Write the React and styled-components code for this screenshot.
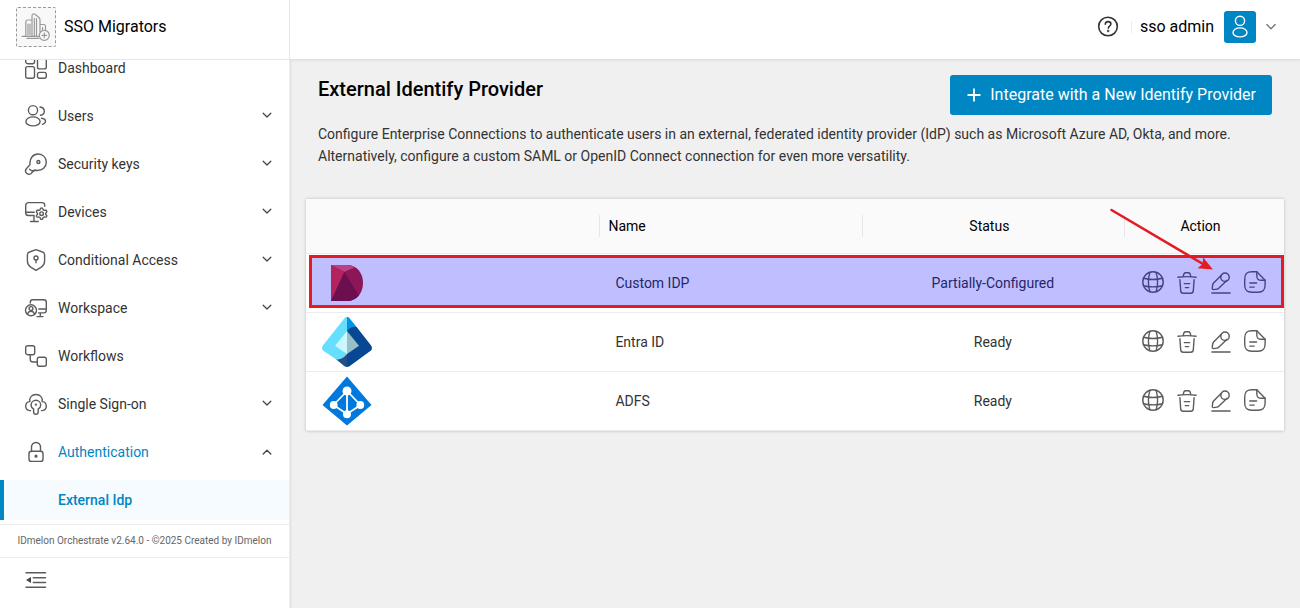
import React from "react";
import styled, { createGlobalStyle } from "styled-components";

const GlobalStyle = createGlobalStyle`
  *, *::before, *::after { box-sizing: border-box; }
  body {
    margin: 0;
    background: #f0f0f0;
    color: #333;
    font-family: Roboto, "Liberation Sans", sans-serif;
    font-size: 14px;
    line-height: 22px;
  }
  button { font: inherit; color: inherit; background: none; border: 0; padding: 0; cursor: pointer; }
  a { color: inherit; text-decoration: none; }
  h1, p { margin: 0; }
  svg { display: block; flex: none; }
`;

const Shell = styled.div`
  display: grid;
  grid-template-columns: 290px minmax(0, 1fr);
  grid-template-rows: 60px minmax(0, 1fr);
  height: 100vh;
`;

const Brand = styled.div`
  display: flex;
  align-items: center;
  gap: 8px;
  padding: 0 16px 6px;
  background: #fff;
  border-right: 1px solid #ececec;
  border-bottom: 1px solid #ececec;
  color: #000;
  font-size: 16px;
`;

const BrandLogo = styled.button`
  width: 40px;
  height: 40px;
  border: 1px dashed #999;
  border-radius: 2px;
  background: #f8f8f8;
`;

const TopBar = styled.header`
  display: flex;
  align-items: center;
  justify-content: flex-end;
  padding: 0 24px 6px 16px;
  background: #fff;
  border-bottom: 1px solid #e2e2e2;
  box-shadow: 0 1px 2px rgba(0, 0, 0, 0.06);
`;

const Divider = styled.span`
  width: 1px;
  height: 12px;
  margin: 0 8px 0 11px;
  background: #ececec;
`;

const UserMenu = styled.button`
  display: flex;
  align-items: center;
  gap: 10px;
  color: #000;
  font-size: 16px;
`;

const Avatar = styled.span`
  display: grid;
  place-items: center;
  width: 32px;
  height: 32px;
  border-radius: 3px;
  background: #0086c3;
`;

const Sidebar = styled.aside`
  display: flex;
  flex-direction: column;
  min-height: 0;
  background: #fff;
  border-right: 1px solid #ececec;
  box-shadow: 1px 0 2px rgba(0, 0, 0, 0.08);
`;

const Nav = styled.nav`
  display: flex;
  flex: 1;
  flex-direction: column;
  justify-content: flex-end;
  gap: 8px;
  min-height: 0;
  padding-bottom: 4px;
  overflow: hidden;
`;

const NavItem = styled.a`
  display: flex;
  flex: none;
  align-items: center;
  gap: 10px;
  height: 40px;
  padding: 0 15px 0 24px;
  color: ${(p) => (p.$open ? "#0086c3" : "#333")};
`;

const NavLabel = styled.span`
  flex: 1;
`;

const SubItem = styled.a`
  display: flex;
  flex: none;
  align-items: center;
  height: 40px;
  padding-left: 54px;
  border-left: 4px solid #0086c3;
  background: #f5fbff;
  color: #0086c3;
  font-weight: 500;
`;

const Version = styled.footer`
  padding: 5px 8px;
  border-top: 1px solid #ececec;
  color: #666;
  font-size: 10px;
  text-align: center;
  white-space: nowrap;
`;

const CollapseBar = styled.div`
  height: 51px;
  padding: 10px 24px;
  border-top: 1px solid #ececec;
`;

const Main = styled.main`
  min-width: 0;
  padding: 15px 16px 24px;
`;

const Intro = styled.section`
  padding: 0 12px;
`;

const TitleRow = styled.div`
  display: flex;
  align-items: flex-start;
  justify-content: space-between;
  margin-bottom: 8px;
`;

const Title = styled.h1`
  color: #000;
  font-size: 20px;
  font-weight: 500;
  line-height: 28px;
`;

const PrimaryButton = styled.button`
  display: flex;
  align-items: center;
  gap: 8px;
  height: 40px;
  padding: 0 16px;
  border-radius: 3px;
  background: #0086c3;
  color: #fff;
  font-size: 16px;
`;

const Card = styled.section`
  margin-top: 32px;
  background: #fff;
  box-shadow: 0 0 3px rgba(0, 0, 0, 0.22);
`;

const Table = styled.table`
  width: 100%;
  table-layout: fixed;
  border-collapse: separate;
  border-spacing: 0;
`;

const LogoCol = styled.col`
  width: 30%;
`;

const ActionCol = styled.col`
  width: 160px;
`;

const HeadCell = styled.th`
  height: 55px;
  padding: 0;
  border-bottom: 1px solid #ececec;
  background: #fafafa;
  color: #000;
  font-weight: 400;
`;

const HeadLabel = styled.div`
  padding: 0 16px 0 8px;
  border-left: 1px solid #e6e6e6;
  text-align: ${(p) => p.$align || "center"};
`;

const Row = styled.tr`
  position: relative;
`;

const Cell = styled.td`
  height: 59px;
  padding: 0 16px;
  border-bottom: 1px solid #ececec;
  text-align: ${(p) => p.$align || "left"};
`;

const Actions = styled.div`
  display: flex;
  justify-content: center;
  gap: 10px;
`;

const Highlight = styled.span`
  position: absolute;
  inset: 1px 0 5px 3px;
  border: 3px solid #e31b23;
  background: rgba(0, 0, 255, 0.25);
  pointer-events: none;
`;

const Pointer = styled.svg`
  position: absolute;
  top: -49px;
  right: 68px;
  pointer-events: none;
`;

function Icon({ children, size = 24, color = "#5c5c5c", width = 1.4 }) {
  return (
    <svg width={size} height={size} viewBox={`0 0 ${size} ${size}`} fill="none" stroke={color}
      strokeWidth={width} strokeLinecap="round" strokeLinejoin="round" aria-hidden="true">
      {children}
    </svg>
  );
}

const gear = Array.from({ length: 48 }, (_, i) => {
  const a = (i / 48) * Math.PI * 2;
  const r = 4.9 + 0.8 * Math.tanh(2.5 * Math.cos(6 * a));
  return `${(17.6 + r * Math.sin(a)).toFixed(2)},${(13.7 + r * Math.cos(a)).toFixed(2)}`;
}).join(" ");

const navIcons = {
  dashboard: (
    <>
      <rect x="1.7" y="1.7" width="8.8" height="6" rx="2" />
      <rect x="1.7" y="10.6" width="8.8" height="11.7" rx="2" />
      <rect x="13.5" y="1.7" width="8.8" height="11.2" rx="2" />
      <rect x="13.5" y="16.4" width="8.8" height="5.9" rx="2" />
    </>
  ),
  users: (
    <>
      <circle cx="9" cy="6.2" r="4.6" />
      <ellipse cx="9" cy="17.4" rx="7.1" ry="4.5" />
      <path d="M16 3c2.700.4 4.300 2 4.300 4.200s-1.600 3.700-3.800 4.100" />
      <path d="M17.500 14.300c2.500.4 4 1.500 4 3s-1.200 2.500-3 3" />
    </>
  ),
  key: (
    <>
      <path d="M6 12.600C5.300 6.500 9 2 14.200 2c4.600 0 8.100 3.600 8.100 8.200 0 5-4 8.400-9 8.300-1.100 0-2-.2-2.900-.5l-2.900 3.100c-1.200 1.400-3.300 1.600-4.700.3-1.500-1.300-1.500-3.300-.4-4.700z" />
      <path d="m5.600 17.200 2 1.600h2.800" />
      <circle cx="14.400" cy="10" r="1.500" />
    </>
  ),
  devices: (
    <>
      <path d="M10 15.500H4.500a2.800 2.800 0 0 1-2.800-2.800V5.300A2.700 2.700 0 0 1 4.400 2.600h13.800A2.500 2.500 0 0 1 20.700 5v1.300M1.700 12.200h8.500M10 15.500v5.700M6.500 21.500h7.800" />
      <polygon points={gear} />
      <circle cx="17.600" cy="13.700" r="1.800" />
    </>
  ),
  shield: (
    <>
      <path d="M12 1.700 18.500 4a3 3 0 0 1 2.100 2.800v6.500c0 2.500-1.100 4.300-3.300 5.800L12 22.300l-5.300-3.200c-2.200-1.500-3.300-3.300-3.300-5.800V6.800A3 3 0 0 1 5.500 4z" />
      <circle cx="12" cy="10" r="2" />
      <path d="M12 12v2.800" />
    </>
  ),
  workspace: (
    <>
      <path d="M6.300 7v-.7a2.600 2.600 0 0 1 2.600-2.600h10.800a2.600 2.600 0 0 1 2.600 2.600v8a2.600 2.600 0 0 1-2.600 2.600h-5.200M14.800 13h7.500M16.300 17v3.500M13 20.600h6" />
      <circle cx="7" cy="14.300" r="5.500" />
      <circle cx="7" cy="12.500" r="1.900" />
      <path d="M3.700 17.800c.5-1.700 1.700-2.600 3.300-2.600s2.800.9 3.300 2.600" />
    </>
  ),
  workflows: (
    <>
      <rect x="1.700" y="1.700" width="9" height="9" rx="2" />
      <rect x="13.300" y="13.300" width="9" height="9" rx="2" />
      <path d="M6.200 10.700v4.600A2.700 2.700 0 0 0 8.900 18h4.400" />
    </>
  ),
  cloud: (
    <>
      <path d="M6.600 18.600h-.8c-2.400-.3-4.100-2-4.100-4.400 0-2.500 1.700-4.400 4.200-4.600C5.100 5.200 8 2.500 12 2.500s6.900 2.700 6.100 7.100c2.500.2 4.200 2.100 4.200 4.600 0 2.400-1.700 4.100-4.100 4.400h-.8" />
      <path d="M9.600 17c-1.700-.8-2.500-2.200-2.500-3.900A4.800 4.800 0 0 1 11.900 8.300a4.800 4.800 0 0 1 4.800 4.800c0 1.700-.9 3.100-2.500 3.900v3a2.300 2.300 0 0 1-4.600 0z" />
      <circle cx="11.900" cy="12.600" r=".5" />
    </>
  ),
  lock: (
    <>
      <path d="M7.500 11V7.100A4.500 4.500 0 0 1 12 2.500a4.500 4.500 0 0 1 4.500 4.600V11" />
      <rect x="5" y="11.200" width="14" height="10.200" rx="2.500" />
      <circle cx="12" cy="16.200" r=".9" fill="#5c5c5c" />
    </>
  ),
};

function Chevron({ up, color = "#444" }) {
  return (
    <Icon size={14} color={color} width={1.3}>
      <path d={up ? "m3.200 9 3.800-3.700L10.800 9" : "M3.200 4.200 7 8l3.800-3.800"} />
    </Icon>
  );
}

const navItems = [
  { label: "Dashboard", icon: "dashboard" },
  { label: "Users", icon: "users", group: true },
  { label: "Security keys", icon: "key", group: true },
  { label: "Devices", icon: "devices", group: true },
  { label: "Conditional Access", icon: "shield", group: true },
  { label: "Workspace", icon: "workspace", group: true },
  { label: "Workflows", icon: "workflows" },
  { label: "Single Sign-on", icon: "cloud", group: true },
  { label: "Authentication", icon: "lock", group: true, open: true },
];

const actionIcons = [
  {
    label: "Open site",
    art: (
      <>
        <circle cx="12" cy="11" r="10.200" />
        <path d="M8.900 1.400C7 7.500 7 14.500 8.900 20.600M15.100 1.400c1.900 6.100 1.900 13.100 0 19.200M2.400 7.300c6.200 1.500 13 1.500 19.200 0M2.400 14.700c6.200 1.500 13 1.500 19.200 0" />
      </>
    ),
  },
  {
    label: "Delete",
    art: (
      <path d="M2.900 6.200c6-.8 12.200-.8 18.200 0M8.200 5.500c.4-2.500.9-3.700 2.300-3.700h3c1.400 0 1.900 1.200 2.300 3.700M4.900 8.800l.8 11.100a2.600 2.600 0 0 0 2.600 2.400h7.400a2.600 2.600 0 0 0 2.600-2.400l.8-11.100M9.300 12.600h5.400M10.300 16.600h3.400" />
    ),
  },
  {
    label: "Edit",
    art: (
      <>
        <path d="M12.300 4.300 4.600 12c-.5.500-.8 1.200-.9 1.900l-.4 3.400c-.1.900.5 1.400 1.400 1.300l3.300-.5c.7-.1 1.300-.4 1.700-.9l8.400-7.900" />
        <circle cx="16" cy="6.200" r="4.200" />
        <path d="M2.900 22h18.200" />
      </>
    ),
  },
  {
    label: "Details",
    art: (
      <>
        <path d="M13.800.8H8.900C3.600.8 1.700 2.900 1.700 8v6c0 5.300 1.900 7.200 7.200 7.200h6c5.300 0 7.200-1.900 7.200-7.200V9.200z" />
        <path d="M13.800.8v3.600c0 3.600 1.200 4.800 4.800 4.800h3.500M6.800 12h6.800M6.800 16.100h4.400" />
      </>
    ),
  },
];

function CustomLogo() {
  return (
    <svg width="50" height="50" viewBox="0 0 50 50" aria-hidden="true">
      <path d="M9 7h16c10 0 16 8 16 18s-6 18-16 18H9z" fill="#bb1f21" />
      <path d="M9 7h16c3 0 5 1 7.300 2.500L22.300 14z" fill="#f95858" />
      <path d="M9 7l13.300 7L9 43z" fill="#f12f29" />
      <path d="M22.300 14 36.800 37.500C34 41 30 43 25 43H9z" fill="#901415" />
    </svg>
  );
}

function EntraLogo() {
  return (
    <svg width="50" height="50" viewBox="0 0 50 50" aria-hidden="true">
      <path d="M25 0c-1.200 0-2 .5-2.700 1.400L.9 28.500c-1.400 1.900-1.100 4.100.8 5.500L14 42.300c4 .8 7.600-1.500 11-5.300z" fill="#66dfff" />
      <path d="M25 0c1.200 0 2 .5 2.700 1.400L35 10.500l-10 8z" fill="#0294e4" />
      <path d="M25 14c2.600-3.500 6-5.100 9.600-4L49.100 28.500c1.400 1.900 1.100 4.100-.8 5.500L27.500 49.200c-.8.600-1.600.8-2.500.8z" fill="#074793" />
      <path d="M14 42.300c4 .8 7.600-1.500 11-5.300v13c-.9 0-1.700-.2-2.500-.8z" fill="#225086" />
      <path d="M25 14 13 28.700 25 37z" fill="#cbf8ff" />
      <path d="M25 14 37 28.700 25 37z" fill="#98bec6" />
    </svg>
  );
}

function AdfsLogo() {
  return (
    <svg width="50" height="50" viewBox="0 0 50 50" aria-hidden="true">
      <path d="M25 .5 49.500 29 25 49.500.5 29z" fill="#0078dc" />
      <path d="M25 15 11.500 29 25 38l13.500-9zM25 15v23" fill="none" stroke="#fff" strokeWidth="1.800" />
      <g fill="#fff">
        <circle cx="25" cy="15" r="4.500" />
        <circle cx="11.700" cy="29" r="3.900" />
        <circle cx="38.300" cy="29" r="3.900" />
        <circle cx="25" cy="38.300" r="4" />
      </g>
    </svg>
  );
}

const providers = [
  { name: "Custom IDP", status: "Partially-Configured", logo: <CustomLogo />, marked: true },
  { name: "Entra ID", status: "Ready", logo: <EntraLogo /> },
  { name: "ADFS", status: "Ready", logo: <AdfsLogo /> },
];

function ProviderRow({ provider }) {
  return (
    <Row>
      <Cell>
        {provider.logo}
        {provider.marked && (
          <>
            <Highlight />
            <Pointer width="110" height="70" viewBox="0 0 110 70" aria-hidden="true">
              <path d="M5.500 5 97 59" stroke="#e31b23" strokeWidth="2.600" strokeLinecap="round" />
              <path d="m107 64.500-15.500-1.300 5-4 .7-6.700z" fill="#e31b23" />
            </Pointer>
          </>
        )}
      </Cell>
      <Cell>{provider.name}</Cell>
      <Cell $align="center">{provider.status}</Cell>
      <Cell>
        <Actions>
          {actionIcons.map((action) => (
            <button key={action.label} type="button" aria-label={`${action.label} ${provider.name}`}>
              <Icon>{action.art}</Icon>
            </button>
          ))}
        </Actions>
      </Cell>
    </Row>
  );
}

export default function App() {
  return (
    <>
      <GlobalStyle />
      <Shell>
        <Brand>
          <BrandLogo type="button" aria-label="Organization logo">
            <svg width="38" height="38" viewBox="1 1 38 38" fill="none" stroke="#999" strokeWidth="1.200" strokeLinecap="round" strokeLinejoin="round" aria-hidden="true">
              <path d="M16 29V9c0-1.800 1-2.500 2.500-2l4 3c1 .8 1.500 1.500 1.500 3v11.500M18.300 29V11.500M20.500 29V11.500M9.800 29V15c0-1.300.7-2 2-2H16M12 28V17M14 28V17M24 17.500h3.500c1.500 0 2 .7 2 2v3M26.500 20.500v2" />
              <path d="M6 29.300h17M11 31.300h12" />
              <circle cx="28.300" cy="28.300" r="5" fill="#f8f8f8" />
              <path d="M26 28.300h4.600M28.300 26v4.600" />
            </svg>
          </BrandLogo>
          SSO Migrators
        </Brand>
        <TopBar>
          <button type="button" aria-label="Help">
            <Icon color="#333" width={1.6}>
              <circle cx="12" cy="11.500" r="9.300" />
              <path d="M9.300 9.300c0-1.600 1.100-2.700 2.800-2.700s2.800 1 2.800 2.500c0 2-2.600 2.100-2.600 4" />
              <circle cx="12.200" cy="16" r=".4" />
            </Icon>
          </button>
          <Divider />
          <UserMenu type="button">
            sso admin
            <Avatar>
              <Icon color="#fff" width={1.400}>
                <circle cx="12" cy="5.800" r="4.600" />
                <ellipse cx="12" cy="17.400" rx="7" ry="4.500" />
              </Icon>
            </Avatar>
            <svg width="10" height="10" viewBox="0 0 10 10" fill="none" stroke="#777" strokeWidth="1.300" strokeLinecap="round" aria-hidden="true">
              <path d="m.8 2.500 4.200 4.300 4.200-4.300" />
            </svg>
          </UserMenu>
        </TopBar>
        <Sidebar>
          <Nav aria-label="Main">
            {navItems.map((item) => (
              <NavItem key={item.label} href="#" $open={item.open}>
                <Icon>{navIcons[item.icon]}</Icon>
                <NavLabel>{item.label}</NavLabel>
                {item.group && <Chevron up={item.open} />}
              </NavItem>
            ))}
            <SubItem href="#" aria-current="page">External Idp</SubItem>
          </Nav>
          <Version>IDmelon Orchestrate v2.64.0 - ©2025 Created by IDmelon</Version>
          <CollapseBar>
            <button type="button" aria-label="Collapse menu">
              <Icon width={1.500}>
                <path d="M2 4.800h19.500M9.300 9.700h12.200M9.300 14.400h12.200M2 19.300h19.500" />
                <path d="M2 12l5-3v6z" fill="#444" stroke="none" />
              </Icon>
            </button>
          </CollapseBar>
        </Sidebar>
        <Main>
          <Intro>
            <TitleRow>
              <Title>External Identify Provider</Title>
              <PrimaryButton type="button">
                <Icon size={16} color="#fff" width={1.800}>
                  <path d="M8 2.200v11.600M2.200 8h11.600" />
                </Icon>
                Integrate with a New Identify Provider
              </PrimaryButton>
            </TitleRow>
            <p>
              Configure Enterprise Connections to authenticate users in an external, federated identity provider
              (IdP) such as Microsoft Azure AD, Okta, and more. Alternatively, configure a custom SAML or OpenID
              Connect connection for even more versatility.
            </p>
          </Intro>
          <Card>
            <Table>
              <colgroup>
                <LogoCol />
                <col />
                <col />
                <ActionCol />
              </colgroup>
              <thead>
                <tr>
                  <HeadCell aria-label="Logo" />
                  <HeadCell scope="col"><HeadLabel $align="left">Name</HeadLabel></HeadCell>
                  <HeadCell scope="col"><HeadLabel>Status</HeadLabel></HeadCell>
                  <HeadCell scope="col"><HeadLabel>Action</HeadLabel></HeadCell>
                </tr>
              </thead>
              <tbody>
                {providers.map((provider) => (
                  <ProviderRow key={provider.name} provider={provider} />
                ))}
              </tbody>
            </Table>
          </Card>
        </Main>
      </Shell>
    </>
  );
}
